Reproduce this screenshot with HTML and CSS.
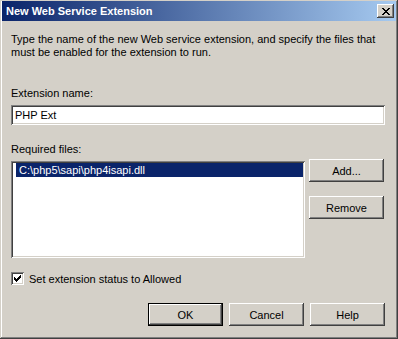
FILE: index.html
```html
<!DOCTYPE html>
<html lang="en">
<head>
    <meta charset="UTF-8">
    <title>New Web Service Extension</title>
    <link rel="stylesheet" href="styles.css">
</head>
<body>
    <div class="window">
        <div class="titlebar">
            <span class="title">New Web Service Extension</span>
            <span class="close-btn">
                <svg width="8" height="7" viewBox="0 0 8 7" shape-rendering="crispEdges">
                    <path d="M0 0h2v1h-2z M6 0h2v1h-2z M1 1h2v1h-2z M5 1h2v1h-2z M2 2h4v1h-4z M3 3h2v1h-2z M2 4h4v1h-4z M1 5h2v1h-2z M5 5h2v1h-2z M0 6h2v1h-2z M6 6h2v1h-2z" fill="#000"/>
                </svg>
            </span>
        </div>

        <div class="content">
            <p class="intro">Type the name of the new Web service extension, and specify the files that must be enabled for the extension to run.</p>

            <div class="field-label">Extension name:</div>
            <div class="textbox">PHP Ext</div>

            <div class="field-label files-label">Required files:</div>
            <div class="files-row">
                <div class="listbox">
                    <div class="list-item selected">C:\php5\sapi\php4isapi.dll</div>
                </div>
                <div class="side-buttons">
                    <div class="btn">Add...</div>
                    <div class="btn">Remove</div>
                </div>
            </div>

            <div class="check-row">
                <span class="checkbox">
                    <svg width="7" height="7" viewBox="0 0 7 7" shape-rendering="crispEdges">
                        <path d="M6 0h1v1h-1z M5 1h2v1h-2z M0 2h1v1h-1z M4 2h3v1h-3z M0 3h2v1h-2z M3 3h3v1h-3z M0 4h5v1h-5z M1 5h3v1h-3z M2 6h1v1h-1z" fill="#000"/>
                    </svg>
                </span>
                <span>Set extension status to Allowed</span>
            </div>

            <div class="dialog-buttons">
                <div class="btn default">OK</div>
                <div class="btn">Cancel</div>
                <div class="btn">Help</div>
            </div>
        </div>
    </div>
</body>
</html>
```

FILE: styles.css
```css
body {
    margin: 0;
    background: #d4d0c8;
    font-family: "Liberation Sans", Arial, sans-serif;
    font-size: 11px;
    color: #000;
}

.window {
    width: 398px;
    height: 339px;
    box-sizing: border-box;
    padding: 1px 2px 2px 2px;
    background: #d4d0c8;
    box-shadow: inset -1px -1px #404040, inset 1px 1px #d4d0c8, inset -2px -2px #808080, inset 2px 2px #fff;
}

.titlebar {
    height: 20px;
    display: flex;
    align-items: center;
    justify-content: space-between;
    padding: 0 2px 0 4px;
    background: linear-gradient(to right, #0a246a, #a6caf0);
}
.title {
    color: #fff;
    font-weight: bold;
}
.close-btn {
    width: 17px;
    height: 14px;
    box-sizing: border-box;
    display: flex;
    align-items: center;
    justify-content: center;
    background: #d4d0c8;
    box-shadow: inset -1px -1px #404040, inset 1px 1px #fff, inset -2px -2px #808080, inset 2px 2px #d4d0c8;
}

.content {
    padding: 12px 11px 0 9px;
}
.intro {
    margin: 0;
    line-height: 13px;
}

.field-label {
    margin-top: 28px;
    line-height: 13px;
}
.files-label {
    margin-top: 18px;
}

.textbox {
    margin-top: 5px;
    height: 20px;
    box-sizing: border-box;
    padding: 3px 4px;
    line-height: 14px;
    background: #fff;
    box-shadow: inset 1px 1px #808080, inset -1px -1px #fff, inset 2px 2px #404040, inset -2px -2px #d4d0c8;
}

.files-row {
    margin-top: 3px;
    display: flex;
    gap: 4px;
}
.listbox {
    margin-top: 2px;
    width: 294px;
    height: 97px;
    box-sizing: border-box;
    padding: 2px;
    background: #fff;
    box-shadow: inset 1px 1px #808080, inset -1px -1px #fff, inset 2px 2px #404040, inset -2px -2px #d4d0c8;
}
.list-item {
    height: 14px;
    line-height: 14px;
    padding-left: 3px;
    margin-left: 3px;
}
.list-item.selected {
    background: #0a246a;
    color: #fff;
}
.side-buttons {
    display: flex;
    flex-direction: column;
    gap: 14px;
}

.btn {
    width: 75px;
    height: 23px;
    box-sizing: border-box;
    display: flex;
    align-items: center;
    justify-content: center;
    background: #d4d0c8;
    box-shadow: inset -1px -1px #404040, inset 1px 1px #fff, inset -2px -2px #808080, inset 2px 2px #d4d0c8;
}
.btn.default {
    border: 1px solid #000;
}

.check-row {
    margin-top: 14px;
    display: flex;
    align-items: center;
    gap: 5px;
}
.checkbox {
    width: 13px;
    height: 13px;
    box-sizing: border-box;
    display: flex;
    align-items: center;
    justify-content: center;
    background: #fff;
    box-shadow: inset 1px 1px #808080, inset -1px -1px #fff, inset 2px 2px #404040, inset -2px -2px #d4d0c8;
}

.dialog-buttons {
    margin-top: 18px;
    display: flex;
    justify-content: flex-end;
    gap: 6px;
}
```
